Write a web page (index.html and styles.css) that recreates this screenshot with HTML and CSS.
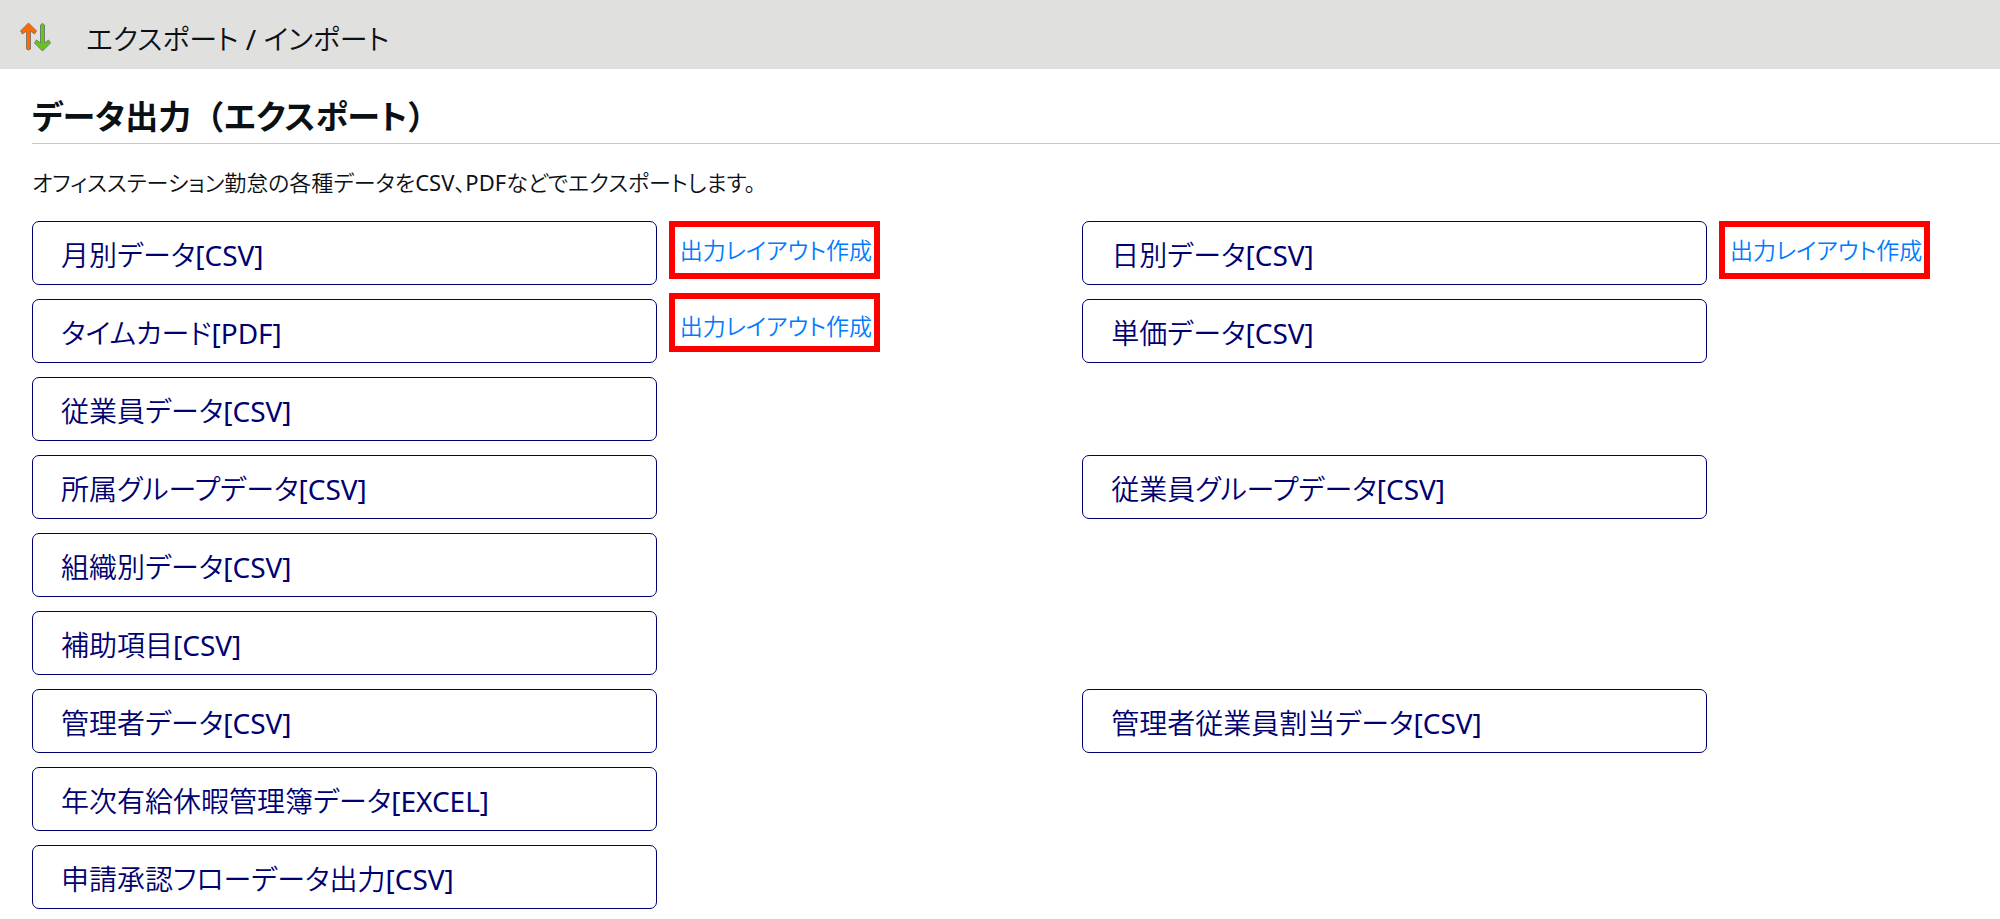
FILE: index.html
```html
<!DOCTYPE html>
<html lang="ja">
  <head>
    <meta charset="UTF-8" />
    <meta name="viewport" content="width=device-width, initial-scale=1.0" />
    <title>エクスポート / インポート</title>
    <link rel="stylesheet" href="styles.css">
  </head>
  <body>
    <header class="page-header">
      <svg class="page-icon" viewBox="0 0 36 32" aria-hidden="true">
        <path d="M10.500 3 L18.500 11 L16.500 14 L12.500 11 V29 Q10.500 31 8.500 29 V11 L4.500 14 L2.500 11 Z" fill="#ff6a00" stroke="#8a7766" stroke-width="1" stroke-linejoin="round" />
        <path d="M24.500 31 L16.500 23 L18.500 20 L22.500 23 V5 Q24.500 2 26.500 5 V23 L30.500 20 L32.500 23 Z" fill="#66c41c" stroke="#71806a" stroke-width="1" stroke-linejoin="round" />
      </svg>
      <h1>エクスポート / インポート</h1>
    </header>

    <main class="content">
      <h2>データ出力<span class="paren">（</span>エクスポート<span class="paren">）</span></h2>
      <p class="lead">オフィスステーション勤怠の各種データをCSV、PDFなどでエクスポートします。</p>

      <div class="export-list">
        <button type="button" class="export-btn">月別データ[CSV]</button>
        <a href="#" class="layout-link">出力レイアウト作成</a>
        <button type="button" class="export-btn right">日別データ[CSV]</button>
        <a href="#" class="layout-link">出力レイアウト作成</a>

        <button type="button" class="export-btn">タイムカード[PDF]</button>
        <a href="#" class="layout-link raised">出力レイアウト作成</a>
        <button type="button" class="export-btn right">単価データ[CSV]</button>

        <button type="button" class="export-btn">従業員データ[CSV]</button>

        <button type="button" class="export-btn">所属グループデータ[CSV]</button>
        <button type="button" class="export-btn right">従業員グループデータ[CSV]</button>

        <button type="button" class="export-btn">組織別データ[CSV]</button>

        <button type="button" class="export-btn">補助項目[CSV]</button>

        <button type="button" class="export-btn">管理者データ[CSV]</button>
        <button type="button" class="export-btn right">管理者従業員割当データ[CSV]</button>

        <button type="button" class="export-btn">年次有給休暇管理簿データ[EXCEL]</button>

        <button type="button" class="export-btn">申請承認フローデータ出力[CSV]</button>
      </div>
    </main>
  </body>
</html>
```

FILE: styles.css
```css
* {
  margin: 0;
  padding: 0;
  box-sizing: border-box;
}

body {
  font-family: "Noto Sans", "Noto Sans CJK JP DemiLight", "Noto Sans CJK JP", sans-serif;
  font-feature-settings: "palt";
  color: #0b1015;
  background-color: #fff;
}

.page-header {
  display: flex;
  align-items: center;
  gap: 32px;
  padding: 8px 18px 5px;
  background-color: #e0e0df;
}

.page-icon {
  width: 36px;
  height: 32px;
}

.page-header h1 {
  padding-top: 6px;
  font-size: 28px;
  font-weight: normal;
  line-height: 50px;
}

.content {
  padding: 22px 0 8px 32px;
}

.content h2 {
  padding-bottom: 4px;
  font-family: "Noto Sans CJK JP", sans-serif;
  font-size: 33px;
  font-weight: bold;
  line-height: 48px;
  border-bottom: 1px solid #c8c8c8;
}

/* keep the brackets full width */
.paren {
  font-feature-settings: normal;
}

.lead {
  margin: 20px 0;
  font-size: 22px;
  line-height: 37px;
}

.export-list {
  display: grid;
  grid-template-columns: 140fr 90fr 140fr 63fr;
  gap: 14px 12px;
}

.export-btn {
  grid-column: 1;
  padding: 4px 28px 0;
  border: 1px solid #000070;
  border-radius: 7px;
  background-color: #fff;
  color: #000070;
  font-family: inherit;
  font-feature-settings: inherit;
  font-size: 28px;
  line-height: 58px;
  text-align: left;
  cursor: pointer;
}

.export-btn.right {
  grid-column: 3;
}

.layout-link {
  justify-self: start;
  align-self: start;
  padding: 0 2px 0 5px;
  border: 6px solid #f00;
  color: #007bff;
  font-size: 23px;
  line-height: 46px;
  text-decoration: none;
}

.layout-link.raised {
  margin-top: -6px;
  padding-top: 7px;
  line-height: 40px;
}
```
